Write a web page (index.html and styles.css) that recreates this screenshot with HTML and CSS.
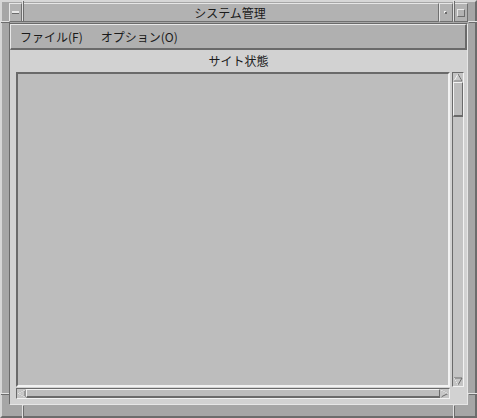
FILE: index.html
```html
<!DOCTYPE html>
<html lang="ja">
<head>
    <meta charset="utf-8" />
    <title>システム管理</title>
    <link rel="stylesheet" href="styles.css">
</head>
<body>
    <div class="window">
        <!-- resize corner marks on the frame -->
        <span class="mark mark-v mark-tl"></span>
        <span class="mark mark-v mark-tr"></span>
        <span class="mark mark-v mark-bl"></span>
        <span class="mark mark-v mark-br"></span>
        <span class="mark mark-h mark-lt"></span>
        <span class="mark mark-h mark-rt"></span>
        <span class="mark mark-h mark-lb"></span>
        <span class="mark mark-h mark-rb"></span>

        <div class="titlebar">
            <div class="tb-btn tb-menu"><span class="bar"></span></div>
            <div class="tb-title">システム管理</div>
            <div class="tb-btn tb-min"><span class="dot"></span></div>
            <div class="tb-btn tb-max"><span class="box"></span></div>
        </div>

        <div class="client">
            <div class="menubar">
                <span class="menu-item">ファイル(F)</span>
                <span class="menu-item">オプション(O)</span>
            </div>
            <div class="pane">
                <div class="pane-label">サイト状態</div>
                <div class="scrolled">
                    <div class="list"></div>
                    <div class="vscroll">
                        <svg class="arrow" width="10" height="9" viewBox="0 0 10 9">
                            <polygon points="5,1 9,8 1,8" fill="#c8c8c8" stroke="#f4f4f4" stroke-width="1" />
                            <polyline points="5,1 9,8 1,8" fill="none" stroke="#6a6a6a" stroke-width="1" />
                        </svg>
                        <div class="vtrough">
                            <div class="vthumb"></div>
                        </div>
                        <svg class="arrow" width="10" height="9" viewBox="0 0 10 9">
                            <polygon points="1,1 9,1 5,8" fill="#c8c8c8" stroke="#6a6a6a" stroke-width="1" />
                            <polyline points="1,1 5,8" fill="none" stroke="#f4f4f4" stroke-width="1" />
                        </svg>
                    </div>
                    <div class="hscroll">
                        <svg class="arrow" width="9" height="9" viewBox="0 0 9 9">
                            <polygon points="1,4.5 8,1 8,8" fill="#c8c8c8" stroke="#6a6a6a" stroke-width="1" />
                            <polyline points="8,1 1,4.5 8,8" fill="none" stroke="#f4f4f4" stroke-width="1" />
                        </svg>
                        <div class="htrough"></div>
                        <svg class="arrow" width="9" height="9" viewBox="0 0 9 9">
                            <polygon points="8,4.5 1,1 1,8" fill="#c8c8c8" stroke="#6a6a6a" stroke-width="1" />
                            <polyline points="1,8 1,1 8,4.5" fill="none" stroke="#f4f4f4" stroke-width="1" />
                        </svg>
                    </div>
                    <div class="corner"></div>
                </div>
            </div>
        </div>
    </div>
</body>
</html>
```

FILE: styles.css
```css
html,
body {
    margin: 0;
    padding: 0;
    background: #a8a8a8;
}

.window {
    position: relative;
    width: 477px;
    height: 418px;
    box-sizing: border-box;
    background: #a6a6a6;
    border-top: 2px solid #d6d6d6;
    border-left: 2px solid #d6d6d6;
    border-bottom: 2px solid #6c6c6c;
    border-right: 2px solid #6c6c6c;
    padding: 1px 7px 11px 7px;
    display: flex;
    flex-direction: column;
    gap: 1px;
    font-family: "Noto Sans CJK JP", "Noto Sans", sans-serif;
    color: #1a1a1a;
}

/* frame resize marks */
.mark {
    position: absolute;
    background: #e2e2e2;
    box-shadow: 1px 1px 0 #6c6c6c;
}

.mark-v {
    width: 1px;
}

.mark-h {
    height: 1px;
}

.mark-tl { left: 20px; top: -2px; height: 21px; }
.mark-tr { left: 451px; top: -2px; height: 21px; }
.mark-bl { left: 20px; bottom: -2px; height: 13px; }
.mark-br { left: 451px; bottom: -2px; height: 13px; }
.mark-lt { left: -2px; top: 19px; width: 9px; }
.mark-rt { right: -2px; top: 19px; width: 9px; }
.mark-lb { left: -2px; top: 391px; width: 9px; }
.mark-rb { right: -2px; top: 391px; width: 9px; }

/* title bar */
.titlebar {
    height: 19px;
    display: flex;
    background: #b2b2b2;
    box-sizing: border-box;
}

.tb-btn {
    width: 14px;
    box-sizing: border-box;
    border-top: 1px solid #e6e6e6;
    border-left: 1px solid #e6e6e6;
    border-bottom: 1px solid #707070;
    border-right: 1px solid #707070;
    display: flex;
    align-items: center;
    justify-content: center;
}

.tb-menu {
    width: 13px;
}

.tb-menu .bar {
    width: 7px;
    height: 2px;
    background: #e8e8e8;
    border-bottom: 1px solid #6c6c6c;
}

.tb-title {
    flex: 1;
    box-sizing: border-box;
    border-top: 1px solid #e6e6e6;
    border-bottom: 1px solid #707070;
    border-right: 1px solid #707070;
    text-align: center;
    font-size: 12px;
    line-height: 17px;
}

.tb-min .dot {
    width: 2px;
    height: 2px;
    background: #6c6c6c;
    box-shadow: -1px -1px 0 #f0f0f0;
}

.tb-max {
    width: 15px;
}

.tb-max .box {
    width: 8px;
    height: 8px;
    box-sizing: border-box;
    border-top: 1px solid #e8e8e8;
    border-left: 1px solid #e8e8e8;
    border-bottom: 1px solid #6c6c6c;
    border-right: 1px solid #6c6c6c;
}

/* client area */
.client {
    flex: 1;
    display: flex;
    flex-direction: column;
    border-top: 1px solid #6a6a6a;
    border-left: 1px solid #6a6a6a;
    border-bottom: 1px solid #e6e6e6;
    border-right: 1px solid #e6e6e6;
    background: #d2d2d2;
}

.menubar {
    height: 26px;
    box-sizing: border-box;
    background: #b0b0b0;
    border-top: 1px solid #e8e8e8;
    border-left: 1px solid #e8e8e8;
    border-bottom: 2px solid #6a6a6a;
    border-right: 2px solid #6a6a6a;
    display: flex;
    align-items: center;
    padding: 0 0 1px 9px;
    gap: 18px;
    font-size: 12px;
}

.pane {
    flex: 1;
    display: flex;
    flex-direction: column;
}

.pane-label {
    height: 22px;
    text-align: center;
    font-size: 12px;
    line-height: 22px;
}

.scrolled {
    flex: 1;
    display: grid;
    grid-template-columns: 434px 12px;
    grid-template-rows: 1fr 11px;
    column-gap: 2px;
    row-gap: 1px;
    margin: 0 3px 5px 6px;
}

.list {
    box-sizing: border-box;
    background: #bdbdbd;
    border-top: 2px solid #6a6a6a;
    border-left: 2px solid #6a6a6a;
    border-bottom: 2px solid #f2f2f2;
    border-right: 2px solid #f2f2f2;
}

.vscroll,
.hscroll {
    box-sizing: border-box;
    background: #c4c4c4;
    border-top: 1px solid #6a6a6a;
    border-left: 1px solid #6a6a6a;
    border-bottom: 1px solid #f2f2f2;
    border-right: 1px solid #f2f2f2;
    display: flex;
}

.vscroll {
    flex-direction: column;
    align-items: center;
}

.hscroll {
    align-items: center;
}

.arrow {
    display: block;
    flex: none;
}

.vtrough {
    flex: 1;
    align-self: stretch;
}

.vthumb {
    height: 35px;
    box-sizing: border-box;
    background: #bcbcbc;
    border-top: 1px solid #f2f2f2;
    border-left: 1px solid #f2f2f2;
    border-bottom: 2px solid #6a6a6a;
    border-right: 1px solid #6a6a6a;
}

.htrough {
    flex: 1;
    align-self: stretch;
    background: #bcbcbc;
    border-top: 1px solid #f2f2f2;
    border-left: 1px solid #f2f2f2;
    border-bottom: 2px solid #6a6a6a;
    border-right: 1px solid #6a6a6a;
}

.corner {
    background: #d2d2d2;
}
```
